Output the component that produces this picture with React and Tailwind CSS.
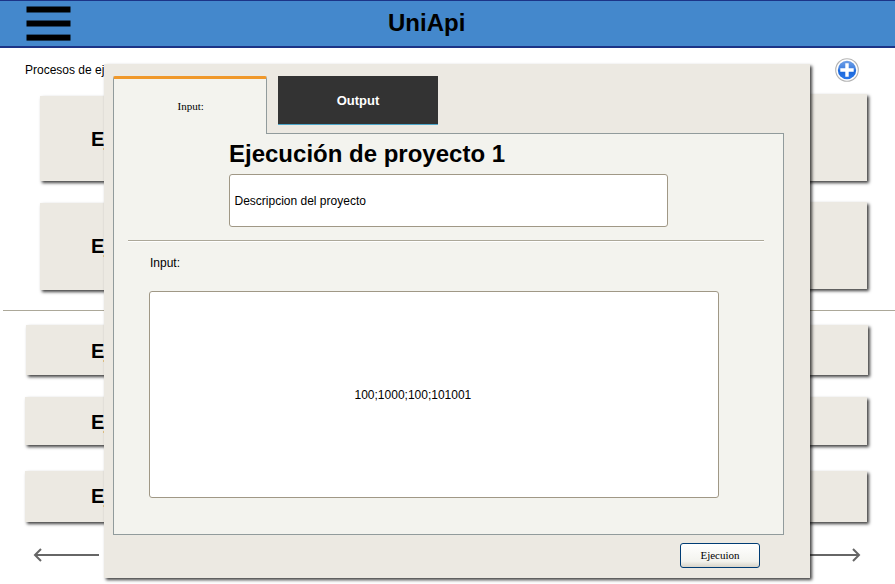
const cardShadow = 'bg-[#ece9e2] shadow-[2px_2px_3px_rgba(0,0,0,0.75)]';

function Header() {
  return (
    <header className="flex h-12 items-start border-t border-b-2 border-[#1c3487] bg-[#4488cc]">
      <svg className="ml-[26px] mt-[5px] h-9 w-[45px]" viewBox="0 0 45 36">
        <g>
          <rect x="0.5" y="0.5" width="44" height="6" />
          <rect x="0.5" y="14.5" width="44" height="6" />
          <rect x="0.5" y="28.6" width="44" height="6" />
        </g>
      </svg>
      <h1 className="ml-[317px] mt-2 text-2xl leading-7 font-bold">UniApi</h1>
    </header>
  );
}

function AddIcon() {
  return (
    <svg className="size-6" viewBox="0 0 24 24">
      <defs>
        <linearGradient id="add" x1="0" y1="0" x2="0" y2="1">
          <stop offset="0" stopColor="#6f9fe6" />
          <stop offset="0.45" stopColor="#3f80e0" />
          <stop offset="0.55" stopColor="#1c68da" />
          <stop offset="1" stopColor="#2a78ea" />
        </linearGradient>
      </defs>
      <circle cx="12" cy="12" r="11.3" fill="#fff" stroke="#b5b5b5" strokeWidth="1.1" />
      <circle cx="12" cy="12" r="9.2" fill="url(#add)" />
      <path d="M12 5.3v13.4M5.3 12h13.4" stroke="#fff" strokeWidth="3.4" />
    </svg>
  );
}

function WideCard({ className }) {
  return (
    <div className={`flex items-center text-xl font-bold ${cardShadow} ${className}`}>Ejecución</div>
  );
}

function Arrow({ className }) {
  return (
    <svg className={className} viewBox="0 0 66 16" fill="none" stroke="#666" strokeWidth="2">
      <path d="M2 8h64M8 2L2 8L8 14" />
    </svg>
  );
}

function Dialog() {
  return (
    <section className="absolute left-[104px] top-16 flex h-[514px] w-[706px] flex-col bg-[#ece9e2] pl-[9px] pt-3 shadow-[2px_2px_3px_rgba(0,0,0,0.75)]">
      <div className="flex h-[57px] items-start gap-[11px]">
        <div className="z-10 flex h-[58px] w-[154px] items-center justify-center rounded-t-[2px] border-x border-t-3 border-x-[#919b9c] border-t-[#f0982a] bg-[#f3f3ee] pl-[1.5px] font-['Liberation_Serif',serif] text-[11px]">
          Input:
        </div>
        <div className="flex h-[49px] w-40 items-center justify-center border-b border-[#4da6c8] bg-[#333] pt-px text-[13px] font-bold text-white">
          Output
        </div>
      </div>
      <div className="flex h-[402px] w-[671px] flex-col border border-[#919b9c] bg-[#f3f3ee]">
        <h2 className="ml-[115px] mt-1.5 text-2xl leading-7 font-bold">Ejecución de proyecto 1</h2>
        <div className="ml-[115px] mt-1.5 flex h-[53px] w-[439px] items-center rounded-[3px] border border-[#a09886] bg-white pl-[4.5px] text-xs">
          Descripcion del proyecto
        </div>
        <div className="ml-3.5 mt-[13px] h-0.5 w-[636px] border-b border-white bg-[#aca899]" />
        <p className="ml-9 mt-[13px] text-xs leading-4">Input:</p>
        <div className="ml-[35px] mt-5 flex h-[207px] w-[570px] items-center rounded-[3px] border border-[#a09886] bg-white pl-[204.5px] text-xs">
          100;1000;100;101001
        </div>
      </div>
      <button className="ml-[567px] mt-2 h-[25px] w-20 rounded-[3px] border border-[#003c74] bg-linear-to-b from-white via-[#f3f3ee] via-75% to-[#d8d4c8] font-['Liberation_Serif',serif] text-[11px]">
        Ejecuion
      </button>
    </section>
  );
}

export default function App() {
  return (
    <div className="relative h-[584px] w-[895px] overflow-hidden bg-white font-['Liberation_Sans',Arial,sans-serif] text-black">
      <Header />
      <main className="flex flex-col">
        <div className="flex h-11 items-center pl-[25px] text-xs">
          <span className="w-[810px]">Procesos de ejecución</span>
          <AddIcon />
        </div>
        <div className="flex h-[91px] items-end justify-between pl-10 pr-7 pb-[2px]">
          <div className={`flex h-[85px] w-96 items-center pl-[51px] text-xl font-bold ${cardShadow}`}>Ejecución</div>
          <div className={`h-[87px] w-96 ${cardShadow}`} />
        </div>
        <div className="mt-[19px] flex h-[88px] items-start justify-between pl-10 pr-7">
          <div className={`mt-px flex h-[87px] w-96 items-center pb-0.5 pl-[51px] text-xl font-bold ${cardShadow}`}>Ejecución</div>
          <div className={`h-[87px] w-96 ${cardShadow}`} />
        </div>
        <div className="ml-[3px] mt-5 h-px bg-[#aca899]" />
        <WideCard className="ml-[26px] mt-3.5 h-[50px] w-[842px] pl-[65px] pt-0.5" />
        <WideCard className="ml-[25px] mt-[22px] h-12 w-[842px] pl-[66px] pt-0.5" />
        <WideCard className="ml-[25px] mt-[26px] h-[51px] w-[842px] pb-0.5 pl-[66px]" />
        <div className="mt-[25px] flex justify-between pl-[33px] pr-[34px]">
          <Arrow className="h-4 w-[66px]" />
          <Arrow className="h-4 w-[66px] rotate-180" />
        </div>
      </main>
      <Dialog />
    </div>
  );
}
